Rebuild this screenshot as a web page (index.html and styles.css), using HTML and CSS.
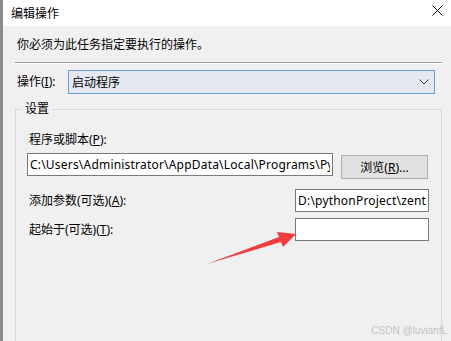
FILE: index.html
```html
<!DOCTYPE html>
<html lang="zh-CN">
<head>
    <meta charset="UTF-8">
    <title>编辑操作</title>
    <link rel="stylesheet" href="styles.css">
</head>
<body>
    <div class="window">
        <div class="titlebar">
            <span class="title">编辑操作</span>
            <svg class="close" width="11" height="11" viewBox="0 0 11 11">
                <path d="M0.5 0.5 L10.5 10.5 M10.5 0.5 L0.5 10.5" stroke="#111" stroke-width="1"/>
            </svg>
        </div>
        <div class="content">
            <p class="intro">你必须为此任务指定要执行的操作。</p>
            <div class="separator"></div>
            <div class="action-row">
                <label class="action-label">操作(<u>I</u>):</label>
                <div class="combo">
                    <span>启动程序</span>
                    <svg width="10" height="6" viewBox="0 0 10 6">
                        <path d="M0.5 0.5 L5 5 L9.5 0.5" fill="none" stroke="#444" stroke-width="1"/>
                    </svg>
                </div>
            </div>
            <div class="group">
                <span class="legend">设置</span>
                <label class="field-label">程序或脚本(<u>P</u>):</label>
                <div class="path-row">
                    <input class="textbox path" type="text" value="C:\Users\Administrator\AppData\Local\Programs\Python\Python39\python.exe">
                    <button class="browse">浏览(<u>R</u>)...</button>
                </div>
                <div class="opt-row first">
                    <label class="field-label">添加参数(可选)(<u>A</u>):</label>
                    <input class="textbox short" type="text" value="D:\pythonProject\zentao\main.py">
                </div>
                <div class="opt-row">
                    <label class="field-label">起始于(可选)(<u>T</u>):</label>
                    <input class="textbox short" type="text" value="">
                </div>
            </div>
        </div>
        <svg class="arrow" width="100" height="40" viewBox="200 230 100 40">
            <polygon points="207,264 279,237 277,232 296,234 283,247 281,242" fill="#f53c3c"/>
        </svg>
        <span class="watermark">CSDN @luvianfL</span>
    </div>
</body>
</html>
```

FILE: styles.css
```css
body {
    margin: 0;
    background-color: #f0f0f0;
    font-family: 'Noto Sans', 'Noto Sans CJK SC', sans-serif;
    font-size: 12px;
    color: #000;
    overflow: hidden;
}
.window {
    position: relative;
    width: 451px;
    height: 341px;
    box-sizing: border-box;
    border-left: 3px solid #8c8c8c;
    display: flex;
    flex-direction: column;
    overflow: hidden;
}
.titlebar {
    height: 26px;
    background: #fff;
    display: flex;
    align-items: center;
    justify-content: space-between;
    padding: 0 8px 0 8px;
    flex-shrink: 0;
}
.title {
    font-size: 12px;
    line-height: 16px;
    color: #000;
    margin-top: 1px;
}
.close {
    margin-bottom: 5px;
}
.content {
    flex: 1;
    display: flex;
    flex-direction: column;
    padding: 0 9px 0 12px;
}
.intro {
    margin: 11px 0 0 2px;
    line-height: 16px;
}
.separator {
    margin-top: 9px;
    height: 1px;
    background: #a0a0a0;
    border-bottom: 1px solid #fff;
}
.action-row {
    display: flex;
    align-items: center;
    margin: 6px 7px 0 0;
}
.action-label {
    width: 51px;
    padding-left: 2px;
    line-height: 16px;
}
.combo {
    flex: 1;
    height: 24px;
    box-sizing: border-box;
    border: 1px solid #6a9fd6;
    background: #e4e9f1;
    display: flex;
    align-items: center;
    justify-content: space-between;
    padding: 0 5px 0 3px;
}
.group {
    position: relative;
    flex: 1;
    margin-top: 15px;
    border: 1px solid #d9d9d9;
    border-bottom: none;
    padding: 22px 11px 0 11px;
    display: flex;
    flex-direction: column;
}
.legend {
    position: absolute;
    top: -9px;
    left: 6px;
    padding: 0 3px;
    background: #f0f0f0;
    line-height: 16px;
}
.field-label {
    line-height: 16px;
    padding-left: 2px;
}
.path-row {
    display: flex;
    align-items: flex-start;
    margin-top: 5px;
}
.textbox {
    height: 23px;
    box-sizing: border-box;
    border: 1px solid #7a7a7a;
    background: #fff;
    font: inherit;
    letter-spacing: 0.2px;
    padding: 0 2px;
    margin: 0;
    outline: none;
    color: #000;
}
.path {
    width: 306px;
}
.browse {
    margin: 2px 0 0 8px;
    width: 87px;
    height: 24px;
    border: 1px solid #adadad;
    background: #e1e1e1;
    font: inherit;
    color: #000;
    padding: 0;
}
.opt-row {
    display: flex;
    align-items: center;
    justify-content: space-between;
    margin: 6px 1px 0 0;
}
.opt-row.first {
    margin-top: 10px;
}
.short {
    width: 134px;
}
.arrow {
    position: absolute;
    left: 197px;
    top: 230px;
}
.watermark {
    position: absolute;
    right: 4px;
    bottom: 5px;
    font-family: 'Liberation Sans', sans-serif;
    font-size: 10px;
    color: #c4c4c4;
}
```
